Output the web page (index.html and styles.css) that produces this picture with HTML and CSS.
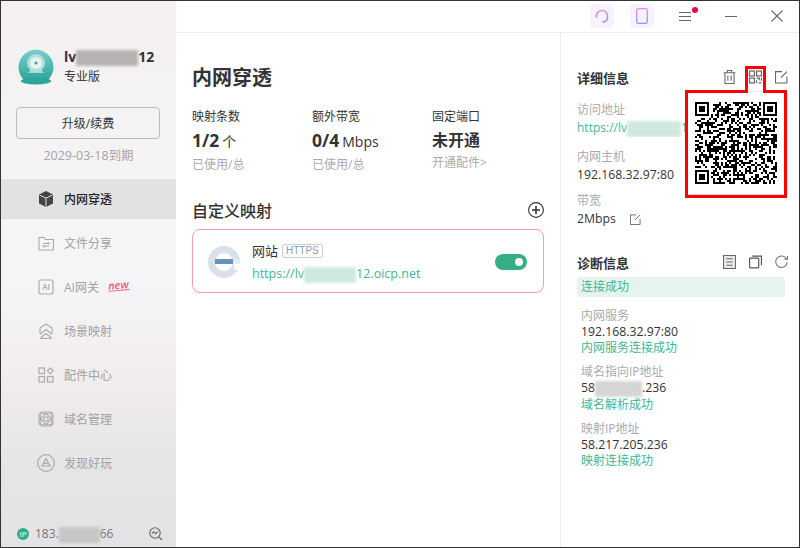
FILE: index.html
```html
<!DOCTYPE html>
<html lang="zh-CN">
<head>
    <meta charset="UTF-8">
    <title>内网穿透</title>
    <link rel="stylesheet" href="styles.css">
</head>
<body>
    <div class="window">
        <aside class="sidebar">
            <div class="user">
                <svg class="avatar" viewBox="0 0 36 38">
                    <defs>
                        <linearGradient id="avatarFill" x1="0" y1="0" x2="0" y2="1">
                            <stop offset="0" stop-color="#78cfcd"/>
                            <stop offset="1" stop-color="#2fa79c"/>
                        </linearGradient>
                    </defs>
                    <path d="M5 31A17.500 17.500 0 1 1 31 31z" fill="url(#avatarFill)"/>
                    <ellipse cx="18" cy="33" rx="15" ry="3.500" fill="#2ba69a"/>
                    <path d="M10 25l4-5h8l4 5z" fill="#a9d9d5"/>
                    <circle cx="18" cy="15" r="9" fill="#b5dedb"/>
                    <circle cx="18" cy="15" r="6" fill="#e4f2f1"/>
                    <circle cx="18" cy="15" r="1.600" fill="#3fa9a0"/>
                </svg>
                <div class="user-text">
                    <div class="user-name">lv<span class="smudge smudge-name"></span>12</div>
                    <div class="user-plan">专业版</div>
                </div>
            </div>
            <button class="renew">升级/续费</button>
            <div class="expire">2029-03-18到期</div>
            <nav class="nav">
                <a class="nav-item active">
                    <svg class="nav-icon" viewBox="0 0 16 16"><path d="M8 0l7 3.500v9L8 16l-7-3.500v-9z" fill="#444"/><path d="M1.500 4L8 7.200 14.500 4M8 7.200V15.500" fill="none" stroke="#e2e2e2" stroke-width="1"/></svg>
                    内网穿透
                </a>
                <a class="nav-item">
                    <svg class="nav-icon" viewBox="0 0 16 16" fill="none" stroke="#aaa" stroke-width="1.100"><path d="M1 2.500h5l1.500 2H15.500V15H1z"/><path d="M5 8.500h6l-1.500-1.300M11 11H5l1.500 1.300"/></svg>
                    文件分享
                </a>
                <a class="nav-item">
                    <svg class="nav-icon" viewBox="0 0 16 16" fill="none" stroke="#aaa" stroke-width="1.200"><rect x="1" y="1" width="14" height="14" rx="2"/><text x="8" y="11" class="nav-icon-text">AI</text></svg>
                    AI网关<span class="new-tag">new</span>
                </a>
                <a class="nav-item">
                    <svg class="nav-icon" viewBox="0 0 16 16" fill="none" stroke="#aaa" stroke-width="1.100"><path d="M8 1l6 4v5l-2 1.500M8 1L2 5v5l2 1.500"/><path d="M3.500 10L8 6.500l4.500 3.500M2.500 15L8 10.500 13.500 15"/><path d="M2.500 15.500h11"/></svg>
                    场景映射
                </a>
                <a class="nav-item">
                    <svg class="nav-icon" viewBox="0 0 16 16" fill="none" stroke="#aaa" stroke-width="1.200"><rect x="1" y="1" width="5.500" height="5.500"/><rect x="1" y="9.500" width="5.500" height="5.500"/><rect x="9.500" y="9.500" width="5.500" height="5.500"/><path d="M12.200 1l2.900 2.800-2.900 2.800-2.800-2.800z"/></svg>
                    配件中心
                </a>
                <a class="nav-item">
                    <svg class="nav-icon" viewBox="0 0 16 16" fill="none" stroke="#aaa" stroke-width="1.100"><circle cx="8" cy="8" r="2.200"/><ellipse cx="8" cy="8" rx="7.400" ry="4.200" transform="rotate(45 8 8)"/><ellipse cx="8" cy="8" rx="7.400" ry="4.200" transform="rotate(-45 8 8)"/><rect x="1" y="1" width="14" height="14" rx="3.500"/></svg>
                    域名管理
                </a>
                <a class="nav-item">
                    <svg class="nav-icon nav-icon-big" viewBox="0 0 18 18" fill="none" stroke="#aaa" stroke-width="1.200"><circle cx="9" cy="9" r="8.300"/><path d="M9 4.500l4 7.500H5z"/><path d="M6.500 9.500h5"/></svg>
                    发现好玩
                </a>
            </nav>
            <div class="sidebar-foot">
                <span class="ip-badge">IP</span>
                <span class="ip-text">183.<span class="smudge smudge-ip"></span>66</span>
                <svg class="ip-search" viewBox="0 0 14 14" fill="none" stroke="#666" stroke-width="1.100"><circle cx="6" cy="6" r="5.200"/><path d="M3 6.500l1.700-1.800 2 2 2-2M10 10l3 3"/></svg>
            </div>
        </aside>

        <div class="content">
            <header class="titlebar">
                <span class="tool-btn">
                    <svg class="tool-icon" viewBox="0 0 16 16" fill="none" stroke-width="1.500">
                        <defs>
                            <linearGradient id="toolStroke" x1="0" y1="0" x2="0" y2="1">
                                <stop offset="0" stop-color="#ea8fd8"/>
                                <stop offset="1" stop-color="#8f95f0"/>
                            </linearGradient>
                        </defs>
                        <path d="M2.500 9.500V8a5.500 5.500 0 0 1 11 0v1.500c0 2.500-2 4.500-5 4.500" stroke="url(#toolStroke)"/>
                    </svg>
                </span>
                <span class="tool-btn">
                    <svg class="tool-icon" viewBox="0 0 16 16" fill="none" stroke-width="1.300"><rect x="2.700" y="0.700" width="10.600" height="14.600" rx="1.500" stroke="url(#toolStroke)"/></svg>
                </span>
                <span class="menu-btn">
                    <span class="menu-line"></span>
                    <span class="menu-line"></span>
                    <span class="menu-line"></span>
                    <span class="menu-dot"></span>
                </span>
                <span class="min-btn"></span>
                <svg class="close-btn" viewBox="0 0 12 12" fill="none" stroke="#666" stroke-width="1.100"><path d="M0.500 0.500l11 11M11.500 0.500l-11 11"/></svg>
            </header>

            <div class="panels">
                <main class="main">
                    <h1 class="page-title">内网穿透</h1>
                    <div class="stats">
                        <div class="stat">
                            <div class="stat-label">映射条数</div>
                            <div class="stat-value"><span class="stat-num">1/2</span><span class="stat-unit">个</span></div>
                            <div class="stat-sub">已使用/总</div>
                        </div>
                        <div class="stat">
                            <div class="stat-label">额外带宽</div>
                            <div class="stat-value"><span class="stat-num">0/4</span><span class="stat-unit">Mbps</span></div>
                            <div class="stat-sub">已使用/总</div>
                        </div>
                        <div class="stat">
                            <div class="stat-label">固定端口</div>
                            <div class="stat-value">未开通</div>
                            <div class="stat-sub">开通配件&gt;</div>
                        </div>
                    </div>
                    <div class="mapping-head">
                        <h2 class="mapping-title">自定义映射</h2>
                        <svg class="plus" viewBox="0 0 16 16" fill="none" stroke="#333" stroke-width="1.100"><circle cx="8" cy="8" r="7.400"/><path d="M4 8h8M8 4v8" stroke-width="1.600"/></svg>
                    </div>
                    <div class="mapping-card">
                        <svg class="site-logo" viewBox="0 0 32 32">
                            <circle cx="16" cy="16" r="12.500" fill="none" stroke="#d9e0ea" stroke-width="7"/>
                            <rect x="26" y="18" width="6" height="6" fill="#fff"/>
                            <rect x="7" y="13" width="18" height="5" fill="#6a8fbb"/>
                            <rect x="25" y="13" width="7" height="5" fill="#e6ebf2"/>
                        </svg>
                        <div class="site-info">
                            <div class="site-name">网站<span class="site-tag">HTTPS</span></div>
                            <div class="site-url">https://lv<span class="smudge smudge-url"></span>12.oicp.net</div>
                        </div>
                        <span class="switch"><span class="switch-knob"></span></span>
                    </div>
                </main>

                <section class="detail">
                    <div class="detail-head">
                        <h3 class="detail-title">详细信息</h3>
                        <div class="detail-tools">
                            <svg class="mini-icon" viewBox="0 0 12 13" fill="none" stroke="#666" stroke-width="1"><path d="M0.500 2.500h11M4 2.500V.500h4v2M1.800 2.500v10h8.400v-10M4.500 5v5M7.500 5v5"/></svg>
                            <svg class="mini-icon" viewBox="0 0 12 12" fill="none" stroke="#666" stroke-width="1.100"><rect x=".5" y=".5" width="4.500" height="4.500"/><rect x="7" y=".5" width="4.500" height="4.500"/><rect x=".5" y="7" width="4.500" height="4.500"/><path d="M7 7h2.500v2M11.500 7v2.500M7 9v2.500M9 11.500h2.500"/></svg>
                            <svg class="mini-icon" viewBox="0 0 12 12" fill="none" stroke="#666" stroke-width="1"><path d="M11 5.500v6H.5V1h6M5.500 6.500L11 1"/></svg>
                        </div>
                    </div>
                    <div class="field-label">访问地址</div>
                    <div class="field-link">https://lv<span class="smudge smudge-detail"></span>1</div>
                    <div class="field-label">内网主机</div>
                    <div class="field-value">192.168.32.97:80</div>
                    <div class="field-label">带宽</div>
                    <div class="field-value">2Mbps<svg class="band-edit" viewBox="0 0 12 12" fill="none" stroke="#666" stroke-width="1"><path d="M11 5.500v6H.5V1h6M5.500 6.500L11 1"/></svg></div>

                    <div class="diag-head">
                        <h3 class="detail-title">诊断信息</h3>
                        <div class="detail-tools">
                            <svg class="mini-icon" viewBox="0 0 12 13" fill="none" stroke="#666" stroke-width="1"><rect x=".5" y=".5" width="11" height="12" fill="#eee"/><path d="M3 3.500h6M3 6.500h6M3 9.500h6"/></svg>
                            <svg class="mini-icon" viewBox="0 0 12 12" fill="none" stroke="#555" stroke-width="1.100"><rect x=".5" y="2.500" width="8.500" height="9" rx="1"/><path d="M3 .5h8.500V9"/></svg>
                            <svg class="mini-icon" viewBox="0 0 12 12" fill="none" stroke="#777" stroke-width="1"><path d="M10.800 3.500A5.300 5.300 0 1 0 11.300 6M8.500 3.500h3v-3"/></svg>
                        </div>
                    </div>
                    <div class="diag-ok">连接成功</div>
                    <div class="diag-group">
                        <div class="diag-label">内网服务</div>
                        <div class="diag-value">192.168.32.97:80</div>
                        <div class="diag-state">内网服务连接成功</div>
                    </div>
                    <div class="diag-group">
                        <div class="diag-label">域名指向IP地址</div>
                        <div class="diag-value">58<span class="smudge smudge-domain"></span>.236</div>
                        <div class="diag-state">域名解析成功</div>
                    </div>
                    <div class="diag-group">
                        <div class="diag-label">映射IP地址</div>
                        <div class="diag-value">58.217.205.236</div>
                        <div class="diag-state">映射连接成功</div>
                    </div>
                </section>
            </div>
        </div>

        <!-- popup over the detail panel, red outline is the annotation on the shot -->
        <div class="qr-popup">
            <svg id="qrCode" class="qr-code" viewBox="0 0 41 41" shape-rendering="crispEdges"></svg>
        </div>
        <svg class="qr-mark" viewBox="0 0 103 134" fill="none" stroke="#f00" stroke-width="3"><path d="M61.500 26.500V2.500h18v24h21v105H1.500v-105z"/></svg>
    </div>
    <script src="qr.js"></script>
</body>
</html>
```

FILE: styles.css
```css
* {
    box-sizing: border-box;
}
body {
    margin: 0;
    font-family: 'Open Sans', 'Noto Sans CJK SC', sans-serif;
    font-size: 12px;
    color: #333;
    background: #fff;
}
h1, h2, h3 {
    margin: 0;
}
.window {
    position: relative;
    display: flex;
    width: 800px;
    height: 548px;
    overflow: hidden;
    border: 1px solid #333;
}
.smudge {
    display: inline-block;
    vertical-align: middle;
    filter: blur(1.5px);
}

/* sidebar */
.sidebar {
    display: flex;
    flex-direction: column;
    flex: none;
    width: 175px;
    background: linear-gradient(#f4f0f0 0%, #f5f5f7 50%, #f1ecec 70%, #e5e5e7 85%, #e3e3e5 100%);
}
.user {
    display: flex;
    align-items: center;
    gap: 10px;
    padding: 46px 0 0 17px;
}
.avatar {
    width: 36px;
    height: 38px;
}
.user-name {
    font-size: 14px;
    line-height: 20px;
    font-weight: 700;
}
.smudge-name {
    width: 62px;
    height: 16px;
    background: #b8b3b3;
}
.user-plan {
    margin-top: 1px;
    line-height: 18px;
}
.renew {
    display: block;
    width: 144px;
    height: 32px;
    margin: 21px 0 0 15px;
    padding: 0;
    background: transparent;
    border: 1px solid #bbb;
    border-radius: 4px;
    font: inherit;
    color: #333;
}
.expire {
    margin-top: 8px;
    font-size: 12.500px;
    line-height: 18px;
    text-align: center;
    color: #a8a4a6;
}
.nav {
    display: flex;
    flex-direction: column;
    gap: 4px;
    margin-top: 14px;
}
.nav-item {
    display: flex;
    align-items: center;
    height: 40px;
    padding-left: 37px;
    color: #a3a1a3;
}
.nav-item.active {
    background: #e2e2e2;
    color: #222;
    font-weight: 500;
}
.nav-icon {
    flex: none;
    width: 16px;
    height: 16px;
    margin-right: 10px;
}
.nav-icon-big {
    width: 18px;
    height: 18px;
    margin: 0 9px 0 -1px;
}
.nav-icon-text {
    font-size: 8px;
    font-weight: 600;
    text-anchor: middle;
    fill: #aaa;
    stroke: none;
}
.new-tag {
    margin: -4px 0 0 9px;
    font-size: 11px;
    font-weight: 600;
    font-style: italic;
    line-height: 11px;
    color: #f2557f;
    border-bottom: 1px solid #f2557f;
    transform: rotate(-5deg);
}
.sidebar-foot {
    display: flex;
    align-items: center;
    margin-top: auto;
    height: 24px;
    margin-bottom: 1px;
    padding: 0 13px 0 16px;
    color: #777;
}
.ip-badge {
    width: 12px;
    height: 12px;
    border-radius: 50%;
    background: #2fae85;
    color: #fff;
    font-size: 8px;
    line-height: 12px;
    text-align: center;
}
.ip-text {
    margin-left: 6px;
}
.smudge-ip {
    width: 41px;
    height: 16px;
    background: #c6c5c7;
}
.ip-search {
    width: 14px;
    height: 14px;
    margin-left: auto;
}

/* title bar */
.content {
    display: flex;
    flex-direction: column;
    flex: 1;
    min-width: 0;
}
.titlebar {
    display: flex;
    align-items: center;
    flex: none;
    height: 32px;
    padding: 0 0 1px 414px;
    border-bottom: 1px solid #eee;
}
.tool-btn {
    display: flex;
    align-items: center;
    justify-content: center;
    width: 24px;
    height: 24px;
    margin-right: 16px;
    border-radius: 5px;
    background: #f6f1fc;
}
.tool-icon {
    width: 16px;
    height: 16px;
}
.menu-btn {
    position: relative;
    display: flex;
    flex-direction: column;
    gap: 3px;
    width: 12px;
    margin-left: 9px;
}
.menu-line {
    height: 1px;
    background: #666;
}
.menu-dot {
    position: absolute;
    top: -5px;
    right: -7px;
    width: 6px;
    height: 6px;
    border-radius: 50%;
    background: #f5003d;
}
.min-btn {
    width: 12px;
    height: 1px;
    margin-left: 34px;
    background: #666;
}
.close-btn {
    width: 12px;
    height: 12px;
    margin-left: 34px;
}

/* main column */
.panels {
    display: flex;
    flex: 1;
    min-height: 0;
}
.main {
    flex: none;
    width: 385px;
    padding: 0 16px;
    border-right: 1px solid #eee;
}
.page-title {
    margin-top: 30px;
    font-size: 20px;
    line-height: 30px;
    font-weight: 700;
}
.stats {
    display: flex;
    margin-top: 15px;
}
.stat {
    flex: none;
    width: 120px;
}
.stat-label {
    line-height: 18px;
}
.stat-value {
    margin-top: 2px;
    font-size: 16px;
    line-height: 24px;
    font-weight: 700;
}
.stat-num {
    font-size: 17.500px;
}
.stat-unit {
    margin-left: 3px;
    font-size: 14px;
    font-weight: 400;
}
.stat-sub {
    margin-top: 2px;
    line-height: 18px;
    color: #aaa;
}
.mapping-head {
    display: flex;
    align-items: center;
    justify-content: space-between;
    margin-top: 24px;
    height: 24px;
}
.mapping-title {
    font-size: 16px;
    font-weight: 500;
}
.plus {
    width: 16px;
    height: 16px;
}
.mapping-card {
    display: flex;
    align-items: center;
    height: 64px;
    margin-top: 7px;
    padding: 2px 16px 0 15px;
    border: 1px solid #f89bb5;
    border-radius: 8px;
}
.site-logo {
    flex: none;
    width: 32px;
    height: 32px;
}
.site-info {
    margin-left: 12px;
}
.site-name {
    display: flex;
    align-items: center;
    font-size: 13px;
    line-height: 20px;
}
.site-tag {
    margin-left: 4px;
    padding: 0 3px;
    border: 1px solid #c5d0dc;
    border-radius: 2px;
    font-family: 'Liberation Sans', sans-serif;
    font-size: 10px;
    line-height: 12px;
    color: #8a9bb0;
}
.site-url {
    margin-top: 4px;
    font-size: 12.500px;
    line-height: 18px;
    color: #43b694;
}
.smudge-url {
    width: 52px;
    height: 16px;
    background: #cfe9df;
}
.switch {
    display: flex;
    align-items: center;
    justify-content: flex-end;
    width: 32px;
    height: 16px;
    margin-left: auto;
    padding-right: 4px;
    border-radius: 8px;
    background: #33ae85;
}
.switch-knob {
    width: 8px;
    height: 8px;
    border-radius: 50%;
    background: #fff;
}

/* right column */
.detail {
    flex: 1;
    min-width: 0;
    padding: 0 14px 0 16px;
}
.detail-head {
    display: flex;
    align-items: center;
    justify-content: space-between;
    margin-top: 34px;
    height: 20px;
}
.detail-title {
    font-size: 13px;
    font-weight: 700;
}
.detail-tools {
    display: flex;
    gap: 13px;
    margin-right: -3px;
}
.mini-icon {
    width: 13px;
    height: 14px;
}
.field-label {
    margin-top: 11px;
    line-height: 18px;
    color: #aaa;
}
.detail-head + .field-label {
    margin-top: 14px;
}
.field-link {
    line-height: 18px;
    white-space: nowrap;
    overflow: hidden;
    color: #43b694;
}
.smudge-detail {
    width: 54px;
    height: 16px;
    background: #cfe9df;
}
.field-value {
    display: flex;
    align-items: center;
    margin-bottom: -3px;
    line-height: 18px;
    font-size: 12.250px;
}
.band-edit {
    width: 11px;
    height: 11px;
    margin-left: 14px;
}
.diag-head {
    display: flex;
    align-items: center;
    justify-content: space-between;
    margin-top: 27px;
    height: 20px;
}
.diag-ok {
    margin-top: 5px;
    height: 20px;
    padding-left: 4px;
    line-height: 20px;
    background: #e5f5ee;
    border-radius: 3px;
    color: #43b694;
}
.diag-group {
    padding-left: 4px;
    margin-top: 8px;
    line-height: 16px;
}
.diag-ok + .diag-group {
    margin-top: 11px;
}
.diag-label {
    color: #aaa;
}
.diag-value {
    font-size: 12.250px;
}
.diag-state {
    color: #43b694;
}
.smudge-domain {
    width: 47px;
    height: 16px;
    background: #d5d5d5;
}

/* qr popup */
.qr-popup {
    position: absolute;
    left: 686px;
    top: 91px;
    display: flex;
    align-items: center;
    justify-content: center;
    width: 98px;
    height: 102px;
    background: #fff;
    box-shadow: 0 1px 4px rgba(0, 0, 0, 0.25);
}
.qr-code {
    width: 82px;
    height: 82px;
}
.qr-mark {
    position: absolute;
    left: 684px;
    top: 64px;
    width: 103px;
    height: 134px;
    pointer-events: none;
}
```

FILE: qr.js
```js
// Draws the code as a fixed 41x41 module grid, same pattern on every load
var size = 41;
var seed = 73;

function next() {
    seed = (seed * 1103515245 + 12345) & 0x7fffffff;
    return (seed >> 16) & 1;
}

function inFinder(x, y) {
    var nearLeft = x < 8, nearRight = x > size - 9;
    var nearTop = y < 8, nearBottom = y > size - 9;
    return (nearLeft && nearTop) || (nearRight && nearTop) || (nearLeft && nearBottom);
}

var d = '';
for (var y = 0; y < size; y++) {
    for (var x = 0; x < size; x++) {
        if (!inFinder(x, y) && next()) {
            d += 'M' + x + ' ' + y + 'h1v1h-1z';
        }
    }
}

// finder squares
[[0, 0], [34, 0], [0, 34]].forEach(function (p) {
    d += 'M' + p[0] + ' ' + p[1] + 'h7v7h-7zM' + (p[0] + 1) + ' ' + (p[1] + 1) + 'v5h5v-5z';
    d += 'M' + (p[0] + 2) + ' ' + (p[1] + 2) + 'h3v3h-3z';
});

var path = document.createElementNS('http://www.w3.org/2000/svg', 'path');
path.setAttribute('d', d);
path.setAttribute('fill', '#000');
path.setAttribute('fill-rule', 'evenodd');
document.getElementById('qrCode').appendChild(path);
```
